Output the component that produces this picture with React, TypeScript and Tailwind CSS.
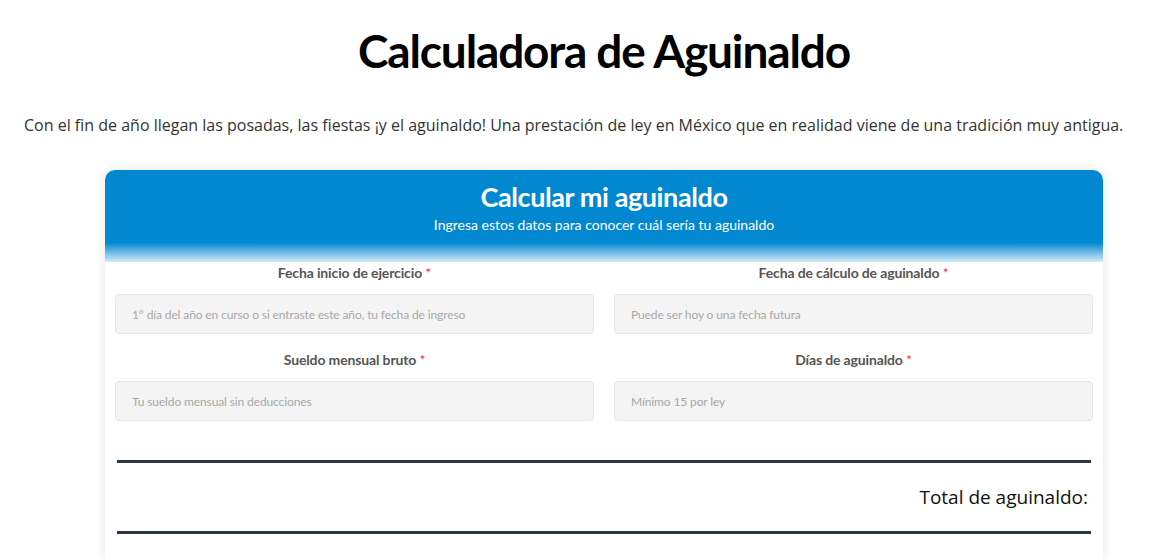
const FIELDS = [
  { label: 'Fecha inicio de ejercicio', placeholder: '1° día del año en curso o si entraste este año, tu fecha de ingreso' },
  { label: 'Fecha de cálculo de aguinaldo', placeholder: 'Puede ser hoy o una fecha futura' },
  { label: 'Sueldo mensual bruto', placeholder: 'Tu sueldo mensual sin deducciones' },
  { label: 'Días de aguinaldo', placeholder: 'Mínimo 15 por ley' },
] as const

const heading = "font-['Lato',sans-serif]"

export default function App() {
  return (
    <div className="min-h-screen bg-white text-[#333]">
      <div className="pl-[47px]">
        <h1 className={`${heading} pt-[25px] text-center text-[46px] font-bold leading-[52px] tracking-[-0.025em] text-black`}>
          Calculadora de Aguinaldo
        </h1>
      </div>

      <p className="mt-[36px] pl-[24px] font-['Open_Sans',sans-serif] text-[16px] leading-[24px] text-[#333]">
        Con el fin de año llegan las posadas, las fiestas ¡y el aguinaldo! Una prestación de ley en México que en realidad viene de una tradición muy antigua.
      </p>

      {/* Calculator card */}
      <div className="pl-[47px]">
        <div className="mx-auto mt-[33px] w-[998px] rounded-t-[10px] bg-white shadow-[0_0_12px_rgba(0,0,0,0.1)]">
          <div className="rounded-t-[10px] bg-[linear-gradient(to_bottom,#0288d1_0%,#0288d1_79%,#d6ebf7_100%)] pt-[9px] pb-[27px] text-center text-white">
            <h2 className={`${heading} text-[27px] font-bold leading-[36px] tracking-[-0.015em]`}>Calcular mi aguinaldo</h2>
            <p className={`${heading} text-[14px] leading-[20px]`}>Ingresa estos datos para conocer cuál sería tu aguinaldo</p>
          </div>

          <div className="grid grid-cols-2 gap-x-[20px] px-[10px] pt-[1px]">
            {FIELDS.map((f) => (
              <div key={f.label} className="mb-[16px]">
                <label className={`${heading} block text-center text-[14px] font-bold leading-[20px] tracking-[-0.01em] text-[#555]`}>
                  {f.label} <span className="font-normal text-[#e53935]">*</span>
                </label>
                <input
                  placeholder={f.placeholder}
                  className={`${heading} mt-[11px] h-[40px] w-full rounded-[4px] border border-[#e6e6e6] bg-[#f4f4f4] px-[16px] text-[12px] tracking-[-0.01em] outline-none placeholder:text-[#a8a8a8]`}
                />
              </div>
            ))}
          </div>

          <div className="px-[12px] pt-[23px] pb-[26px]">
            <div className="h-[3px] bg-[#2d3748]" />
            <div className="py-[19px] pr-[3px] text-right font-['Open_Sans',sans-serif] text-[19px] leading-[30px] text-[#111]">
              Total de aguinaldo:
            </div>
            <div className="h-[3px] bg-[#2d3748]" />
          </div>
        </div>
      </div>
    </div>
  )
}
